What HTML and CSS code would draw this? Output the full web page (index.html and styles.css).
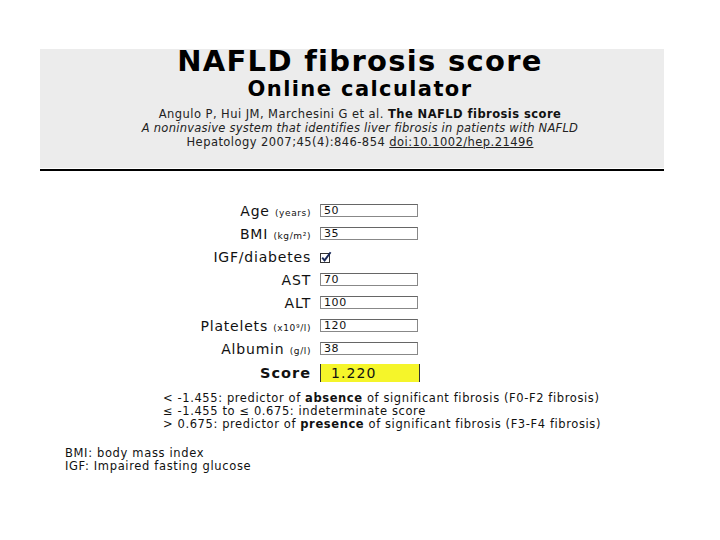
FILE: index.html
```html
<!DOCTYPE html>
<html>
<head>
<meta charset="utf-8">
<link rel="stylesheet" href="styles.css">
</head>
<body>
<div class="page">
  <header class="head">
    <h1 class="title">NAFLD fibrosis score</h1>
    <h2 class="subtitle">Online calculator</h2>
    <p class="cite">Angulo P, Hui JM, Marchesini G et al. <b>The NAFLD fibrosis score</b><br>
    <i>A noninvasive system that identifies liver fibrosis in patients with NAFLD</i><br>
    Hepatology 2007;45(4):846-854 <a class="doi" href="#">doi:10.1002/hep.21496</a></p>
  </header>
  <div class="rule"></div>
  <div class="form">
    <div class="row"><span class="lab">Age <small>(years)</small></span><span class="inp">50</span></div>
    <div class="row"><span class="lab">BMI <small>(kg/m²)</small></span><span class="inp">35</span></div>
    <div class="row"><span class="lab">IGF/diabetes</span><span class="chk"><svg width="12" height="12" viewBox="0 0 12 12"><rect x="0.5" y="2.5" width="9" height="9" fill="#fff" stroke="#333"/><path d="M2.2 6.6 L4.6 9.4 L10.6 1.2" fill="none" stroke="#1a2a5a" stroke-width="1.9"/></svg></span></div>
    <div class="row"><span class="lab">AST</span><span class="inp">70</span></div>
    <div class="row"><span class="lab">ALT</span><span class="inp">100</span></div>
    <div class="row"><span class="lab">Platelets <small>(x10⁹/l)</small></span><span class="inp">120</span></div>
    <div class="row"><span class="lab">Albumin <small>(g/l)</small></span><span class="inp">38</span></div>
    <div class="row score"><span class="lab"><b>Score</b></span><span class="out">1.220</span></div>
  </div>
  <div class="legend">
    <div>&lt; -1.455: predictor of <b>absence</b> of significant fibrosis (F0-F2 fibrosis)</div>
    <div>≤ -1.455 to ≤ 0.675: indeterminate score</div>
    <div>&gt; 0.675: predictor of <b>presence</b> of significant fibrosis (F3-F4 fibrosis)</div>
  </div>
  <div class="notes">
    <div>BMI: body mass index</div>
    <div>IGF: Impaired fasting glucose</div>
  </div>
</div>
</body>
</html>
```
FILE: styles.css
```css
html, body { margin: 0; padding: 0; background: #fff; }
body { font-family: "DejaVu Sans", Verdana, sans-serif; color: #111; }
.page { width: 624px; margin-left: 40px; padding-top: 49px; }
.head { background: #ececec; height: 119px; display: flex; flex-direction: column; align-items: center; padding-left: 16px; box-sizing: border-box; }
.title { margin: -3px 0 0; font-size: 29px; line-height: 30px; font-weight: bold; color: #000; letter-spacing: 1.3px; white-space: nowrap; }
.subtitle { margin: 2px 0 0; font-size: 21px; line-height: 23px; font-weight: bold; color: #000; letter-spacing: 1.4px; white-space: nowrap; }
.cite { margin: 6px 0 0; font-size: 11.5px; line-height: 14px; color: #222; letter-spacing: 0.45px; white-space: nowrap; text-align: center; }
.cite i { letter-spacing: 0.25px; }
.cite b { color: #111; }
.doi { color: #222; text-decoration: underline; }
.rule { height: 2px; background: #000; margin-top: 1px; }
.form { margin-top: 33px; display: flex; flex-direction: column; gap: 10px; }
.row { display: flex; align-items: center; height: 13px; }
.lab { width: 271px; text-align: right; font-size: 14px; color: #111; padding-right: 9px; white-space: nowrap; letter-spacing: 0.8px; }
.lab small { font-size: 9px; letter-spacing: 0.6px; }
.inp { box-sizing: border-box; width: 98px; height: 13px; border: 1px solid #888; border-top-color: #666; background: #fff; font-size: 11px; line-height: 11px; padding-left: 3px; color: #111; letter-spacing: 0.6px; }
.chk { display: flex; height: 13px; align-items: center; }
.row.score { height: 18px; margin-top: -1px; }
.score .lab { font-size: 14.5px; letter-spacing: 1px; }
.out { box-sizing: border-box; width: 100px; height: 18px; background: #f5f52a; border-left: 1px solid #333; border-right: 1px solid #333; font-size: 14px; line-height: 18px; padding-left: 10px; color: #111; letter-spacing: 1.1px; }
.legend { margin: 10px 0 0 123px; font-size: 11.5px; line-height: 13px; color: #111; letter-spacing: 0.6px; }
.notes { margin: 16px 0 0 25px; font-size: 11.5px; line-height: 13px; color: #111; letter-spacing: 0.65px; }
```
